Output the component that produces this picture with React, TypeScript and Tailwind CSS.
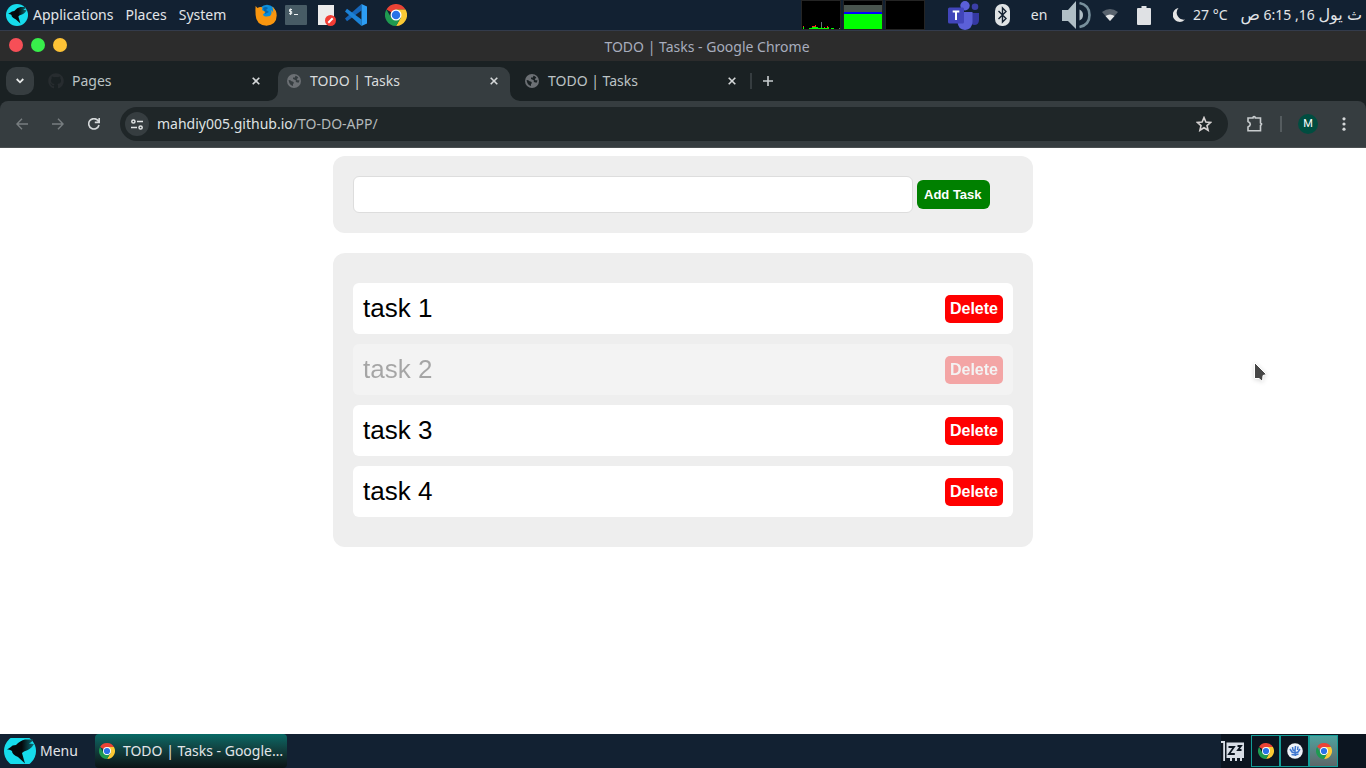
import { useState } from 'react';
import type { FormEvent, ReactNode } from 'react';
import { FaGithub } from 'react-icons/fa';

type Task = { id: number; title: string; done: boolean };

function BirdLogo({ className }: { className: string }) {
  return (
    <svg className={className} viewBox="0 0 32 32" preserveAspectRatio="xMidYMid slice" aria-hidden="true">
      <defs>
        <linearGradient id="wing" x1="0" y1="0" x2="1" y2="0">
          <stop offset="0.55" stopColor="#05090b" />
          <stop offset="1" stopColor="#0b6f78" />
        </linearGradient>
      </defs>
      <circle cx="16" cy="16" r="16" fill="#16dcec" />
      <path
        d="M3 14.500 L6.500 12.300 Q8 10 12 10 Q16 5.500 21 4.500 L29 4.500 Q28 7.500 25 8.500 L30 9 Q27 14.500 20 16.500 L18 18 L21 28.500 L14 22 Q8 19.500 8 16 Q6 14 3 14.500 Z"
        fill="url(#wing)"
      />
    </svg>
  );
}

function ChromeLogo({ className }: { className: string }) {
  return (
    <svg className={className} viewBox="0 0 48 48" aria-hidden="true">
      <path d="M24 24 L3.200 12 A24 24 0 0 1 44.800 12 L24 12 Z" fill="#ea4335" />
      <path d="M24 12 H44.800 A24 24 0 0 1 24 48 L34.400 30 Z" fill="#fbc934" />
      <path d="M3.200 12 L13.600 30 L34.400 30 L24 48 A24 24 0 0 1 3.200 12 Z" fill="#1e9a50" />
      <circle cx="24" cy="24" r="12" fill="#fff" />
      <circle cx="24" cy="24" r="9.300" fill="#2a72e8" />
    </svg>
  );
}

function GlobeIcon({ land }: { land: string }) {
  return (
    <svg className="size-4" viewBox="0 0 16 16" aria-hidden="true">
      <circle cx="8" cy="8" r="7" fill="#6c7074" />
      <path
        d="M2.600 7 Q4.500 7 5.500 8.300 Q7.500 8.200 8 10 L7 11 V13 Q3 12 2.600 7 Z M9.300 2.800 L9 4.500 H7 V6 L9.800 7.300 V9 L12.500 9.800 Q13.600 8.500 13.300 7 L11.800 7.400 L10.800 6.200 L12.300 4.600 Q11 3 9.300 2.800 Z"
        fill={land}
      />
    </svg>
  );
}

function FirefoxLogo() {
  return (
    <svg className="size-[22px]" viewBox="0 0 22 22" aria-hidden="true">
      <circle cx="12" cy="9.500" r="8.800" fill="#0a8fdc" />
      <path d="M8 4 Q11 2 13 4 L11 6 L14 8 L10 10 Z" fill="#0567ae" />
      <path
        d="M.6 2 L2.500 4 Q5 2.500 7.500 3.500 L7 6 L10.500 8 L8 10.500 Q8.500 13 11.500 12.500 L15 12 Q17.500 9.500 16 6 Q18 7.500 18.300 9 Q18.500 5 17 2.500 Q21.700 6 21.700 11.500 Q21.500 21 11.500 21.700 Q1 21 .6 11 Q.2 6 .6 2 Z"
        fill="#f9960f"
      />
    </svg>
  );
}

function TerminalIcon() {
  return (
    <svg className="h-5 w-[22px]" viewBox="0 0 22 20" aria-hidden="true">
      <rect width="22" height="20" rx="1" fill="#475b65" />
      <path d="M7 4.500 H4.500 V6.500 H6.700 V8.700 H4 M5.600 3.500 V10 M9 9.500 H13" stroke="#eef2f3" strokeWidth="1" fill="none" />
    </svg>
  );
}

function EditorIcon() {
  return (
    <svg className="h-[21px] w-[18px]" viewBox="0 0 18 21" aria-hidden="true">
      <rect width="16" height="20" fill="#ececec" />
      <circle cx="12.500" cy="15.500" r="5.500" fill="#f23c34" />
      <path d="M10.300 17.700 L14.700 13.300" stroke="#fff" strokeWidth="2" />
    </svg>
  );
}

function CodeIcon() {
  return (
    <svg className="size-[22px]" viewBox="0 0 22 22" aria-hidden="true">
      <path d="M0 14.500 L2 17.200 L16.500 6.500 V0 Z" fill="#1565b8" />
      <path d="M0 7.500 L2 4.800 L16.500 15.500 V22 Z" fill="#1b82d6" />
      <path d="M16.500 0 L22 2.500 V19.500 L16.500 22 Z" fill="#2c9df4" />
    </svg>
  );
}

function TeamsIcon() {
  return (
    <svg className="h-[29px] w-8" viewBox="0 0 32 29" aria-hidden="true">
      <circle cx="27" cy="5.800" r="3.300" fill="#3b3fa8" />
      <path d="M20 12 H31 V19 Q31 24 26 24 L20 22 Z" fill="#3539a3" />
      <circle cx="17" cy="4.700" r="4.700" fill="#5b60d8" />
      <path d="M10 11 H24.500 V21 Q24 28.500 17 29 Q10 28.500 9.500 21 Z" fill="#5b60d8" />
      <rect y="6.500" width="16" height="16" rx="1.500" fill="#4145ba" />
      <path d="M4.700 10.500 H11.300 M8 10.500 V19" stroke="#fff" strokeWidth="2" />
    </svg>
  );
}

function BluetoothIcon() {
  return (
    <svg className="h-[22px] w-[15px]" viewBox="0 0 15 22" aria-hidden="true">
      <rect width="15" height="22" rx="7" fill="#dfe3e5" />
      <path d="M3.500 7 L11 14.500 L7.500 18 V4 L11 7.500 L3.500 15" fill="none" stroke="#132131" strokeWidth="1.400" />
    </svg>
  );
}

function SpeakerIcon() {
  return (
    <svg className="h-7 w-[29px]" viewBox="0 0 29 28" aria-hidden="true">
      <path d="M0 9 H6 L14 0 V28 L6 20 H0 Z" fill="#b0bec5" />
      <path d="M17.500 8.500 Q21 10 21 14 Q21 18 17.500 19.500 Z" fill="#b0bec5" />
      <path d="M17.500 2 Q27.500 4 27.500 14 Q27.500 24 17.500 26" fill="none" stroke="#78909c" strokeWidth="2.600" />
    </svg>
  );
}

function WifiIcon() {
  return (
    <svg className="h-3 w-4" viewBox="0 0 16 12" aria-hidden="true">
      <path d="M0 3 Q8 -3 16 3 L8 12 Z" fill="#59636e" />
      <path d="M3.500 7 Q8 4 12.500 7 L8 12 Z" fill="#e4e6e8" />
    </svg>
  );
}

function BatteryIcon() {
  return (
    <svg className="h-[19px] w-3.5" viewBox="0 0 14 19" aria-hidden="true">
      <path d="M4.500 0 H9.500 V2 H13 Q14 2 14 3 V18 Q14 19 13 19 H1 Q0 19 0 18 V3 Q0 2 1 2 H4.500 Z" fill="#dfe1e4" />
    </svg>
  );
}

function MoonIcon() {
  return (
    <svg className="h-3.5 w-3" viewBox="0 0 12 14" aria-hidden="true">
      <path d="M5.500 0 A7 7 0 1 0 12 11.500 A7 7 0 0 1 5.500 0 Z" fill="#e4e4e4" />
    </svg>
  );
}

function SystemMonitor() {
  return (
    <div className="flex gap-0.5">
      <svg className="h-[30px] w-10" viewBox="0 0 40 30" role="img" aria-label="Processor">
        <rect x=".5" y=".5" width="39" height="29" fill="#000" stroke="#242424" />
        <path d="M2 26h1v3H2zM8 28h4v1H8zM11 27h6v2h-6zM17 28h11v1H17zM20 27h1v2h-1zM26 27h2v2h-2zM30 28h3v1h-3z" fill="#0f0" />
        <path d="M2 26h1v1H2zM11 26h4v1h-4zM14 25h1v2h-1zM23 27h1v1h-1zM26 26h1v2h-1z" fill="#f22" />
        <path d="M20 22h1v5h-1zM38 28h1v1h-1z" fill="#677" />
      </svg>
      <svg className="h-[30px] w-10" viewBox="0 0 40 30" role="img" aria-label="Memory">
        <rect x=".5" y=".5" width="39" height="29" fill="#000" stroke="#242424" />
        <path d="M1 5h38v7H1z" fill="#49544e" />
        <path d="M1 12h38v2H1z" fill="#00f" />
        <path d="M1 14h38v15H1z" fill="#0f0" />
      </svg>
      <svg className="h-[30px] w-10" viewBox="0 0 40 30" role="img" aria-label="Network">
        <rect x=".5" y=".5" width="39" height="29" fill="#000" stroke="#242424" />
      </svg>
    </div>
  );
}

function TopPanel() {
  return (
    <header className="flex h-[31px] shrink-0 items-center border-b border-[#333b4b] bg-[#122132] pl-1.5 pr-1 text-[#e2e5e8]">
      <BirdLogo className="mr-[5px] size-[22px] shrink-0" />
      <nav className="flex gap-3">
        <button type="button">Applications</button>
        <button type="button">Places</button>
        <button type="button">System</button>
      </nav>
      <div className="ml-[29px] flex items-center">
        <FirefoxLogo />
        <div className="ml-2 mr-[11px]"><TerminalIcon /></div>
        <EditorIcon />
        <div className="ml-[9px] mr-[18px]"><CodeIcon /></div>
        <ChromeLogo className="size-[22px]" />
      </div>
      <div className="ml-auto flex items-center">
        <SystemMonitor />
        <div className="ml-[23px] mr-[15px]"><TeamsIcon /></div>
        <BluetoothIcon />
        <span className="ml-[18px] mr-3 w-[22px] text-center">en</span>
        <SpeakerIcon />
        <div className="ml-[11px] mr-[19px]"><WifiIcon /></div>
        <BatteryIcon />
        <div className="ml-[22px] mr-2"><MoonIcon /></div>
        <span>27 °C</span>
        <time dir="rtl" lang="ar" className="ml-[13px] whitespace-nowrap pb-0.5">
          <span className="text-base leading-5">ث يول</span> 16, 6:15 <span className="text-base leading-5">ص</span>
        </time>
      </div>
    </header>
  );
}

function TitleBar() {
  return (
    <div className="flex h-[30px] shrink-0 items-center bg-[#2c2c2c] px-[9px]">
      <div className="flex gap-2 pb-0.5">
        <button type="button" aria-label="Close window" className="size-3.5 rounded-full bg-[#f64f57]" />
        <button type="button" aria-label="Minimize window" className="size-3.5 rounded-full bg-[#38ee4b]" />
        <button type="button" aria-label="Maximize window" className="size-3.5 rounded-full bg-[#fdc236]" />
      </div>
      <p className="flex-1 pr-2.5 pt-0.5 text-center text-[#a8adbd]">TODO | Tasks - Google Chrome</p>
    </div>
  );
}

function CloseGlyph() {
  return (
    <svg className="size-2" viewBox="0 0 8 8" aria-hidden="true">
      <path d="M.7 .7 L7.300 7.300 M7.300 .7 L.7 7.300" stroke="#d5d8d9" strokeWidth="1.600" />
    </svg>
  );
}

function Tab({ title, icon, active = false }: { title: string; icon: ReactNode; active?: boolean }) {
  return (
    <div className={active ? 'relative h-[34px] w-[232px] rounded-t-[10px] bg-[#363d40] text-[#d9dcdd]' : 'h-[34px] w-[232px] text-[#bcc3c5]'}>
      {active && (
        <>
          <svg className="absolute -left-2.5 bottom-0 size-2.5" viewBox="0 0 10 10" aria-hidden="true">
            <path d="M10 0 A10 10 0 0 1 0 10 H10 Z" fill="#363d40" />
          </svg>
          <svg className="absolute -right-2.5 bottom-0 size-2.5" viewBox="0 0 10 10" aria-hidden="true">
            <path d="M0 0 A10 10 0 0 0 10 10 H0 Z" fill="#363d40" />
          </svg>
        </>
      )}
      <div className="flex h-7 items-center pl-2 pr-3">
        {icon}
        <button type="button" role="tab" aria-selected={active} className="ml-2 flex-1 text-left">{title}</button>
        <button type="button" aria-label={`Close ${title}`}><CloseGlyph /></button>
      </div>
    </div>
  );
}

function TabStrip() {
  return (
    <div className="flex h-10 shrink-0 bg-[#1a2123] pl-1.5 pt-1.5">
      <button type="button" aria-label="Search tabs" className="mr-1.5 flex size-7 items-center justify-center rounded-[10px] bg-[#363d40]">
        <svg className="h-[6px] w-2" viewBox="0 0 8 6" aria-hidden="true">
          <path d="M.7 1 L4 4.300 L7.300 1" fill="none" stroke="#e6e8e8" strokeWidth="1.800" />
        </svg>
      </button>
      <div role="tablist" className="flex gap-1.5">
        <Tab title="Pages" icon={<FaGithub className="size-4 text-[#272c2f]" />} />
        <Tab title="TODO | Tasks" icon={<GlobeIcon land="#363d40" />} active />
        <Tab title="TODO | Tasks" icon={<GlobeIcon land="#1a2123" />} />
      </div>
      <div className="ml-0.5 mt-1.5 h-4 w-0.5 bg-[#363d40]" />
      <button type="button" aria-label="New tab" className="ml-0.5 flex size-7 items-center justify-center">
        <svg className="size-[10px]" viewBox="0 0 10 10" aria-hidden="true">
          <path d="M5 0 V10 M0 5 H10" stroke="#c8cdcf" strokeWidth="1.600" />
        </svg>
      </button>
    </div>
  );
}

function Toolbar() {
  return (
    <div className="shrink-0 bg-[#1a2123]">
      <div className="flex h-[47px] items-center rounded-t-lg border-b border-[#4a4f51] bg-[#363d40] pl-2 pr-3">
        <div className="flex gap-2 text-[#787e80]">
          <button type="button" aria-label="Back" className="flex size-7 items-center justify-center">
            <svg className="size-3" viewBox="0 0 12 12" fill="none" stroke="currentColor" strokeWidth="1.400">
              <path d="M12 6 H1 M6 .8 L.9 6 L6 11.200" />
            </svg>
          </button>
          <button type="button" aria-label="Forward" className="flex size-7 items-center justify-center">
            <svg className="size-3" viewBox="0 0 12 12" fill="none" stroke="currentColor" strokeWidth="1.400">
              <path d="M0 6 H11 M6 .8 L11.100 6 L6 11.200" />
            </svg>
          </button>
          <button type="button" aria-label="Reload" className="flex size-7 items-center justify-center text-[#d5d8d9]">
            <svg className="size-3" viewBox="0 0 12 12" fill="none" stroke="currentColor" strokeWidth="1.600">
              <path d="M11 7 A5.200 5.200 0 1 1 10 2.600 L11 4 M11.200 0 V4.400 H6.800" />
            </svg>
          </button>
        </div>
        <div className="ml-3 flex h-[34px] flex-1 items-center rounded-full bg-[#1f2628] pl-[5px] pr-4">
          <button type="button" aria-label="Site information" className="mr-2 flex size-6 items-center justify-center rounded-full bg-[#363d40]">
            <svg className="h-[11px] w-3" viewBox="0 0 12 11" fill="none" stroke="#e2e5e5" strokeWidth="1.500">
              <circle cx="2.400" cy="2.500" r="1.600" />
              <path d="M6 2.500 H12 M0 8.500 H6" />
              <circle cx="9.600" cy="8.500" r="1.600" />
            </svg>
          </button>
          <a href="https://mahdiy005.github.io/TO-DO-APP/" className="flex-1 text-[#b4b9ba]">
            <span className="text-[#dfe2e3]">mahdiy005.github.io</span>/TO-DO-APP/
          </a>
          <button type="button" aria-label="Bookmark this tab">
            <svg className="size-4" viewBox="0 0 16 16" fill="none" stroke="#d5d1d1" strokeWidth="1.600" aria-hidden="true">
              <path d="M8 1.600 L9.900 6 L14.600 6.400 L11 9.600 L12.100 14.200 L8 11.700 L3.900 14.200 L5 9.600 L1.400 6.400 L6.100 6 Z" />
            </svg>
          </button>
        </div>
        <button type="button" aria-label="Extensions" className="ml-[18px]">
          <svg className="size-[18px]" viewBox="0 0 18 18" fill="none" stroke="#c8ccce" strokeWidth="1.600">
            <path d="M2 3 H7 V2.300 Q8 1 9.300 2.300 V3 H14.500 V8 Q16.800 8.800 14.500 10.500 V15.700 H2 V12 Q4.300 11 4.300 9.300 Q4.300 7.500 2 6.500 Z" />
          </svg>
        </button>
        <div className="ml-4 h-4 w-0.5 bg-[#555c5f]" />
        <button type="button" aria-label="Profile" className="ml-4 size-5 rounded-full bg-[#004d40] text-center font-['Roboto',sans-serif] text-[11px] font-normal leading-5 text-white">
          M
        </button>
        <button type="button" aria-label="Browser menu" className="ml-4 flex w-5 justify-center">
          <svg className="h-3.5 w-1" viewBox="0 0 4 14" fill="#d5d8d9">
            <circle cx="2" cy="1.800" r="1.600" />
            <circle cx="2" cy="7" r="1.600" />
            <circle cx="2" cy="12.200" r="1.600" />
          </svg>
        </button>
      </div>
    </div>
  );
}

function TodoApp() {
  const [tasks, setTasks] = useState<Task[]>([
    { id: 1, title: 'task 1', done: false },
    { id: 2, title: 'task 2', done: true },
    { id: 3, title: 'task 3', done: false },
    { id: 4, title: 'task 4', done: false },
  ]);
  const [draft, setDraft] = useState('');

  function addTask(event: FormEvent) {
    event.preventDefault();
    if (!draft.trim()) return;
    setTasks([...tasks, { id: Date.now(), title: draft, done: false }]);
    setDraft('');
  }

  return (
    <main className="relative flex-1 bg-white pt-2 font-['Liberation_Sans',Arial,sans-serif]">
      <div className="mx-auto flex max-w-[700px] flex-col gap-5">
        <form onSubmit={addTask} className="flex items-center gap-1 rounded-xl bg-[#eee] p-5">
          <input
            type="text"
            aria-label="New task"
            value={draft}
            onChange={(event) => setDraft(event.target.value)}
            className="h-[37px] w-[560px] rounded-md border border-[#ddd] bg-white px-2.5 text-black outline-none"
          />
          <button type="submit" className="rounded-md bg-[green] py-[7px] pl-[7px] pr-2 text-[13px] font-bold leading-[15px] text-white">
            Add Task
          </button>
        </form>
        <ul className="flex flex-col gap-2.5 rounded-xl bg-[#eee] px-5 py-[30px]">
          {tasks.map((task) => (
            <li
              key={task.id}
              className={
                task.done
                  ? 'flex h-[51px] items-center justify-between rounded-md bg-white px-2.5 opacity-30'
                  : 'flex h-[51px] items-center justify-between rounded-md bg-white px-2.5'
              }
            >
              <span className="pb-px text-[26px] leading-[30px] text-black">{task.title}</span>
              <button
                type="button"
                onClick={() => setTasks(tasks.filter((item) => item.id !== task.id))}
                className="rounded-[5px] bg-[red] p-[5px] text-base font-bold leading-[18px] text-white"
              >
                Delete
              </button>
            </li>
          ))}
        </ul>
      </div>
      <svg className="absolute right-[98px] top-[213px] h-6 w-4 drop-shadow-sm" viewBox="0 0 16 24" aria-hidden="true">
        <path d="M2.500 1.500 L14.500 13.500 L11 14.500 L10.500 20.500 L7 17.500 H2.500 Z" fill="#464646" stroke="#fff" strokeWidth="1" />
      </svg>
    </main>
  );
}

function Taskbar() {
  return (
    <footer className="flex h-[34px] shrink-0 items-center bg-[#122132] pl-1 text-[#e2e5e8]">
      <button type="button" className="flex items-center gap-1">
        <BirdLogo className="h-[26px] w-8" />
        Menu
      </button>
      <button
        type="button"
        className="ml-[17px] flex h-full w-48 items-center gap-2 rounded-sm bg-linear-to-b from-[#076a66] to-[#0a1416] px-1"
      >
        <ChromeLogo className="size-4 shrink-0" />
        <span className="whitespace-nowrap">TODO | Tasks - Google…</span>
      </button>
      <div className="ml-auto flex h-full items-center bg-[#0c1520] pr-7">
        <svg className="mr-[7px] h-5 w-[23px]" viewBox="0 0 23 20" aria-hidden="true">
          <path d="M0 0 H4 V20 H2.200 V2 H0 Z M5.500 1.500 H23 V17 H21 V20 H19 V17 H16 V20 H14 V17 H11 V20 H9 V17 H5.500 Z" fill="#d8dde6" />
          <path d="M7.500 6 H13 L8 13 H13.800 M16.500 5 H20 L17 9 H20.500" fill="none" stroke="#0c1520" strokeWidth="1.800" />
        </svg>
        <div className="flex h-8">
          <button type="button" aria-label="Chrome, workspace 1" className="flex w-[29px] items-center justify-center border border-[#139c97]">
            <ChromeLogo className="size-4" />
          </button>
          <button type="button" aria-label="Updates, workspace 2" className="flex w-[29px] items-center justify-center border border-[#139c97]">
            <svg className="size-4" viewBox="0 0 16 16" aria-hidden="true">
              <circle cx="8" cy="8" r="7.800" fill="#eef2f8" />
              <path d="M8.500 3 L8 8 L8.500 13 M3 6 L5 9 L8 10 M13 6 L11 9 L8 10 M5.500 4 L6 7 L8 8 M11 3.500 L10.500 7 M4.500 11.500 L8 12 L11.500 11" fill="none" stroke="#3f77cf" strokeWidth="1.500" />
            </svg>
          </button>
          <button
            type="button"
            aria-label="Chrome, workspace 3"
            className="flex w-[29px] items-center justify-center border border-[#139c97] bg-linear-to-b from-[#4ca39f] to-[#5b6668]"
          >
            <ChromeLogo className="size-4" />
          </button>
        </div>
      </div>
    </footer>
  );
}

export default function App() {
  return (
    <div className="flex min-h-screen flex-col font-['Noto_Sans','DejaVu_Sans',sans-serif] text-sm">
      <TopPanel />
      <TitleBar />
      <TabStrip />
      <Toolbar />
      <TodoApp />
      <Taskbar />
    </div>
  );
}
